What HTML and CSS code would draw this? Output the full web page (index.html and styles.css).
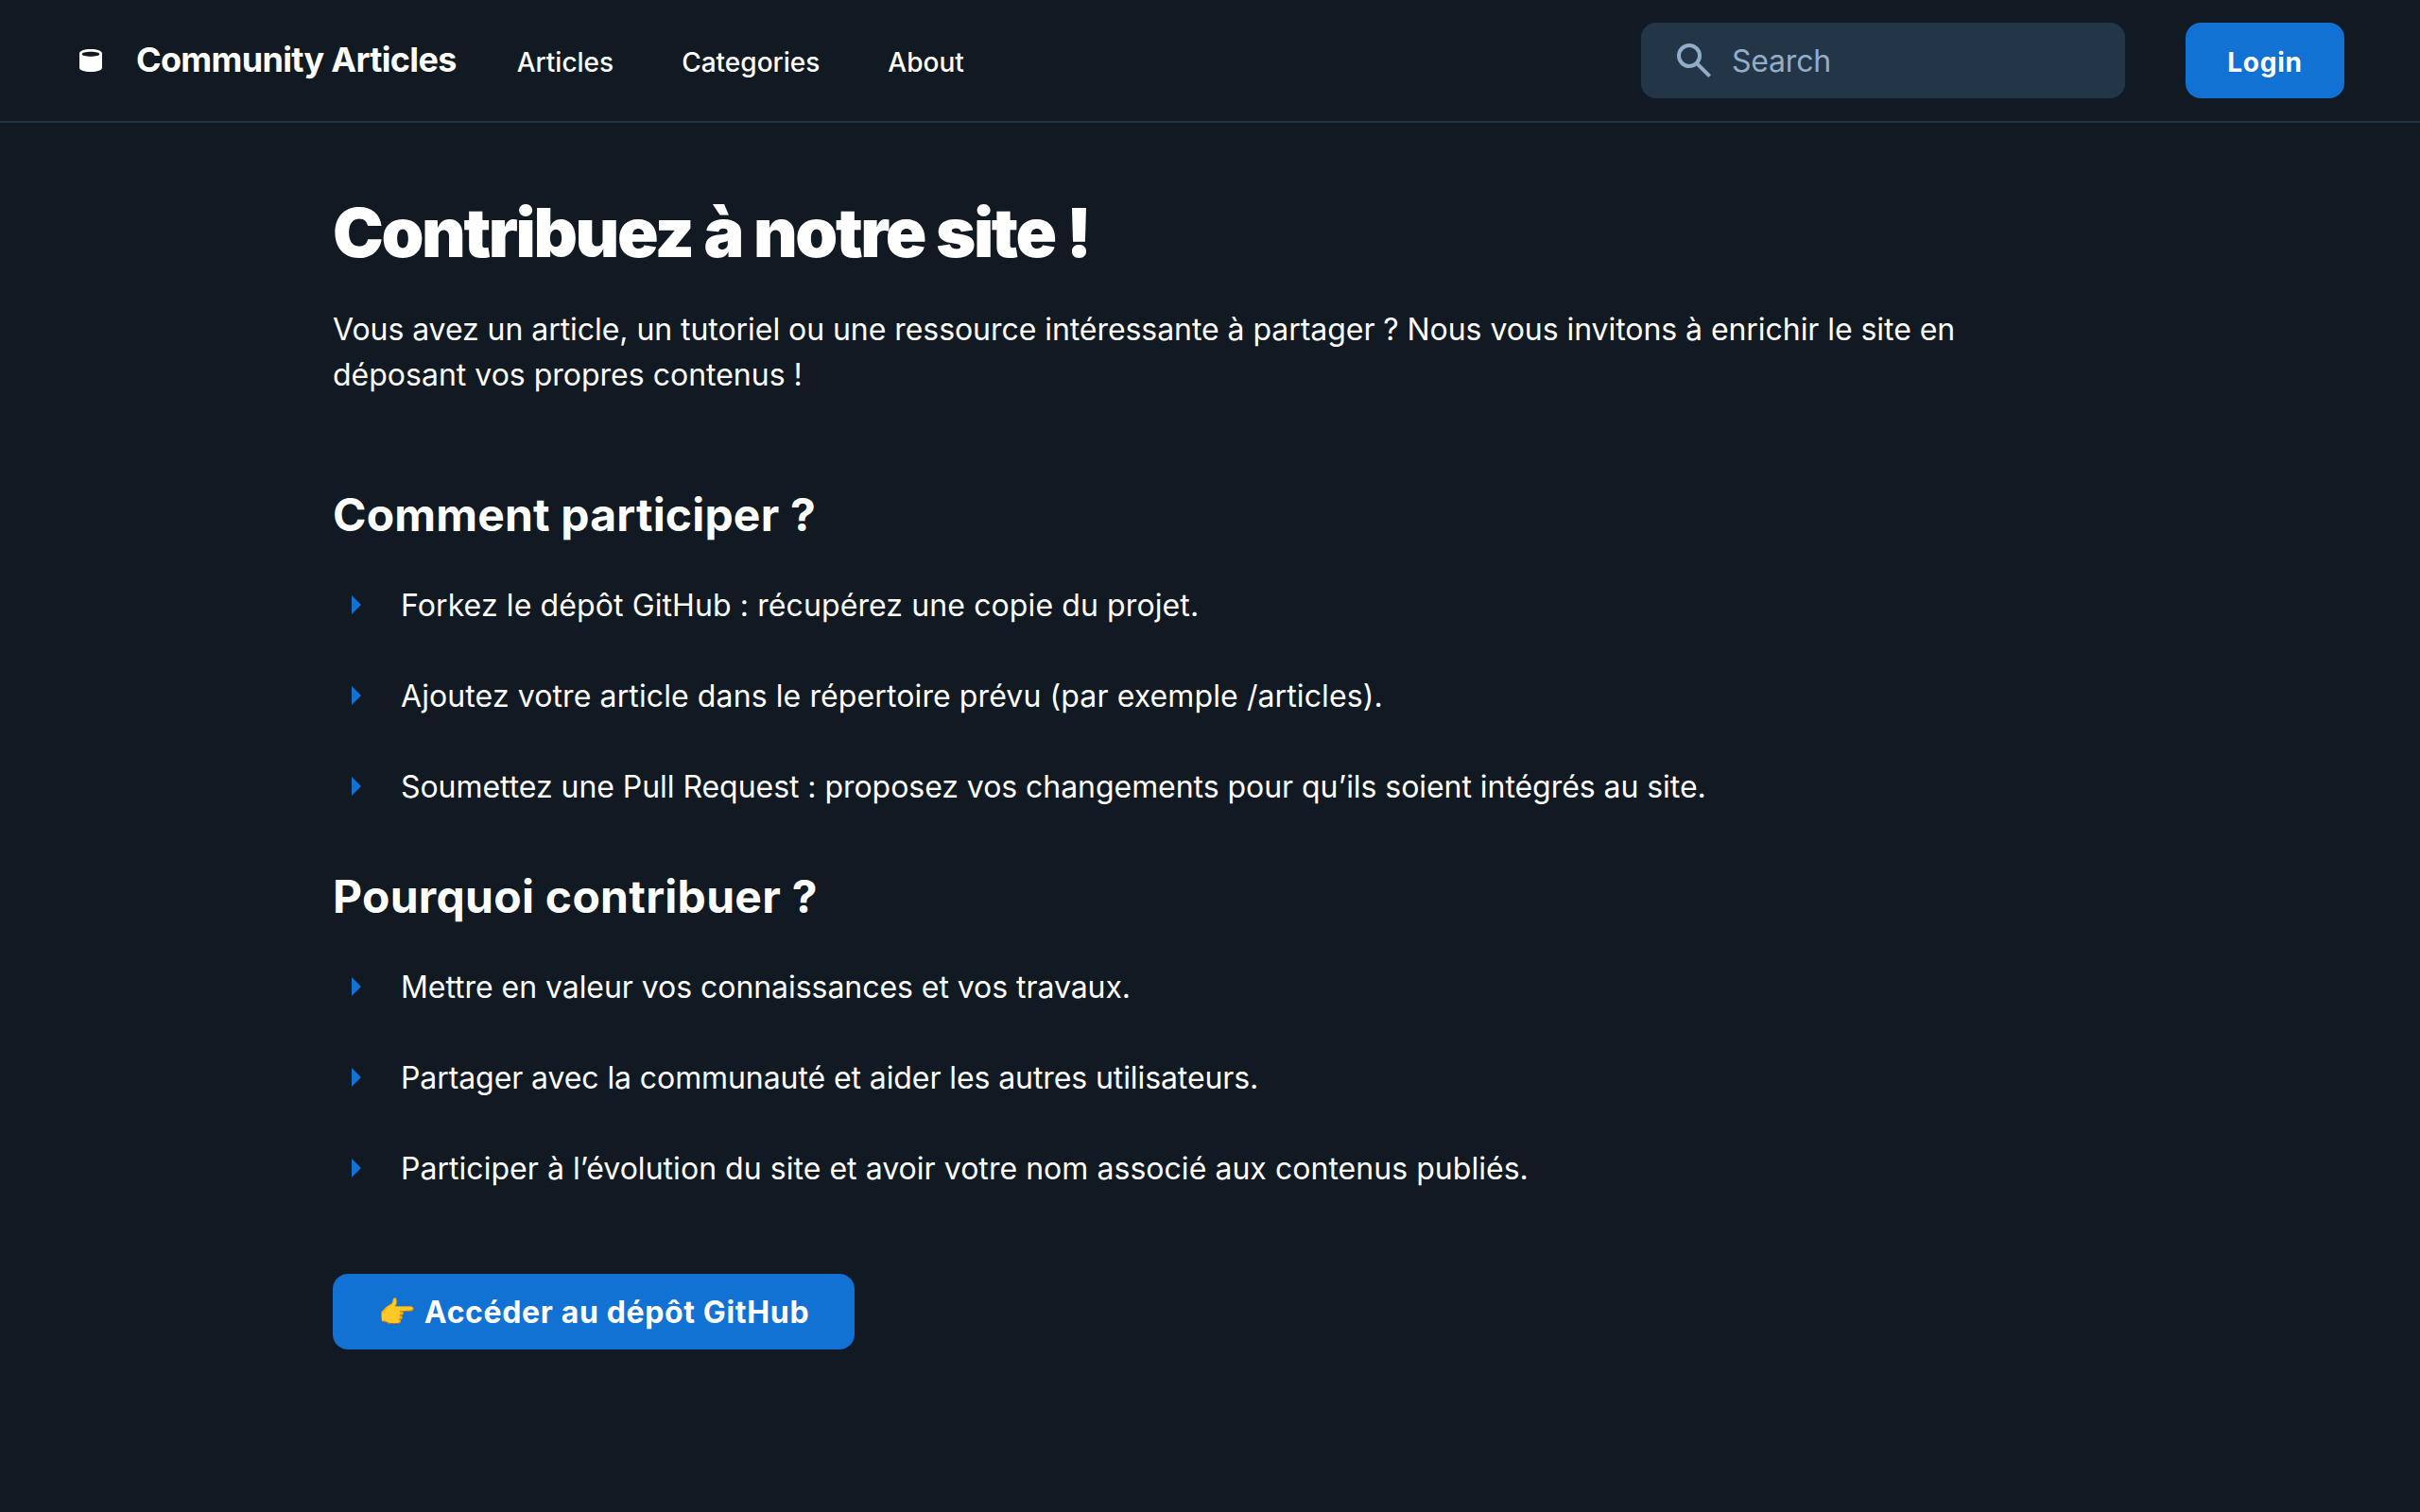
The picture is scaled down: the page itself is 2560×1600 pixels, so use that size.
FILE: index.html
```html
<!DOCTYPE html>
<html lang="fr">
<head>
<meta charset="utf-8">
<title>Community Articles</title>
<link rel="stylesheet" href="styles.css">
</head>
<body>
<header class="header">
  <div class="brand">
    <svg class="logo" viewBox="0 0 32 32" fill="currentColor"><path fill-rule="evenodd" d="M4 8.5C4 5.9 9 4 16 4S28 5.9 28 8.5V23.5C28 26.4 23 28 16 28S4 26.4 4 23.5ZM6.7 9.2C6.7 10.6 10.5 11.7 16 11.7S25.3 10.6 25.3 9.2 21.5 6.8 16 6.8 6.7 7.8 6.7 9.2Z"/></svg>
    <span class="brand-name">Community Articles</span>
  </div>
  <nav class="nav"><a>Articles</a><a>Categories</a><a>About</a></nav>
  <div class="search">
    <svg class="search-icon" viewBox="0 0 48 48" fill="none" stroke="currentColor" stroke-width="4"><circle cx="19" cy="19" r="11"/><path d="M26.8 26.8L40.6 40.6"/></svg>
    <span class="placeholder">Search</span>
  </div>
  <a class="button login">Login</a>
</header>
<main class="main">
  <h1 class="title">Contribuez à notre site !</h1>
  <p class="intro">Vous avez un article, un tutoriel ou une ressource intéressante à partager ? Nous vous invitons à enrichir le site en déposant vos propres contenus !</p>
  <section class="section">
    <h2 class="heading">Comment participer ?</h2>
    <ul class="list">
      <li class="loose">Forkez le dépôt GitHub : récupérez une copie du projet.</li>
      <li class="loose">Ajoutez votre article dans le répertoire prévu (par exemple /articles).</li>
      <li class="snug">Soumettez une Pull Request : proposez vos changements pour qu’ils soient intégrés au site.</li>
    </ul>
  </section>
  <section class="section">
    <h2 class="heading wide">Pourquoi contribuer ?</h2>
    <ul class="list">
      <li class="snug">Mettre en valeur vos connaissances et vos travaux.</li>
      <li class="tight">Partager avec la communauté et aider les autres utilisateurs.</li>
      <li class="relaxed">Participer à l’évolution du site et avoir votre nom associé aux contenus publiés.</li>
    </ul>
  </section>
  <a class="button cta">👉 Accéder au dépôt GitHub</a>
</main>
</body>
</html>
```
FILE: styles.css
```css
* { box-sizing: border-box; }
body { margin: 0; min-height: 1600px; background: #111a22; color: #fff; font-family: Inter, "Noto Sans", sans-serif; font-size: 32px; line-height: 48px; }
.header { display: flex; align-items: center; height: 130px; padding: 0 80px; border-bottom: 2px solid #233648; }
.brand { display: flex; align-items: center; gap: 32px; }
.logo { width: 32px; height: 32px; }
.brand-name { padding-bottom: 2px; font-size: 36px; font-weight: 700; letter-spacing: -0.68px; }
.nav { display: flex; gap: 72px; margin-left: 64px; padding-top: 4px; font-size: 28px; font-weight: 500; line-height: 42px; }
.search { display: flex; align-items: center; gap: 16px; width: 512px; height: 80px; margin-left: auto; padding-left: 32px; border-radius: 16px; background: #233648; color: #92adc9; }
.search-icon { width: 48px; height: 48px; }
.placeholder { padding-top: 2px; letter-spacing: -0.2px; }
.button { display: inline-flex; align-items: center; height: 80px; border-radius: 16px; background: #1172d4; font-weight: 700; }
.login { width: 168px; margin-left: 64px; padding-top: 4px; justify-content: center; font-size: 28px; letter-spacing: 0.8px; }
.main { width: 1856px; margin: 0 auto; padding: 71px 0; }
.title { margin: 0; font-size: 72px; line-height: 90px; font-weight: 900; letter-spacing: -2.4px; }
.intro { margin: 34px 0 94px; }
.intro::first-line { letter-spacing: -0.055px; }
.heading { margin: 0 0 42px; font-size: 48px; line-height: 60px; font-weight: 700; letter-spacing: 0.17px; }
.wide { letter-spacing: 0.28px; }
.list { display: grid; gap: 48px; margin: 0 0 62px; padding: 0; list-style: none; }
.section:last-of-type .list { margin-bottom: 87px; }
.list li { display: flex; align-items: center; gap: 42px; padding-left: 20px; }
.list li::before { content: ""; width: 10px; height: 20px; margin-bottom: 2px; background: #1172d4; clip-path: polygon(0 0, 100% 50%, 0 100%); }
.loose { letter-spacing: 0.105px; }
.relaxed { letter-spacing: 0.04px; }
.snug { letter-spacing: -0.05px; }
.tight { letter-spacing: -0.09px; }
.cta { padding: 2px 48px 0; letter-spacing: 0.64px; }
```
